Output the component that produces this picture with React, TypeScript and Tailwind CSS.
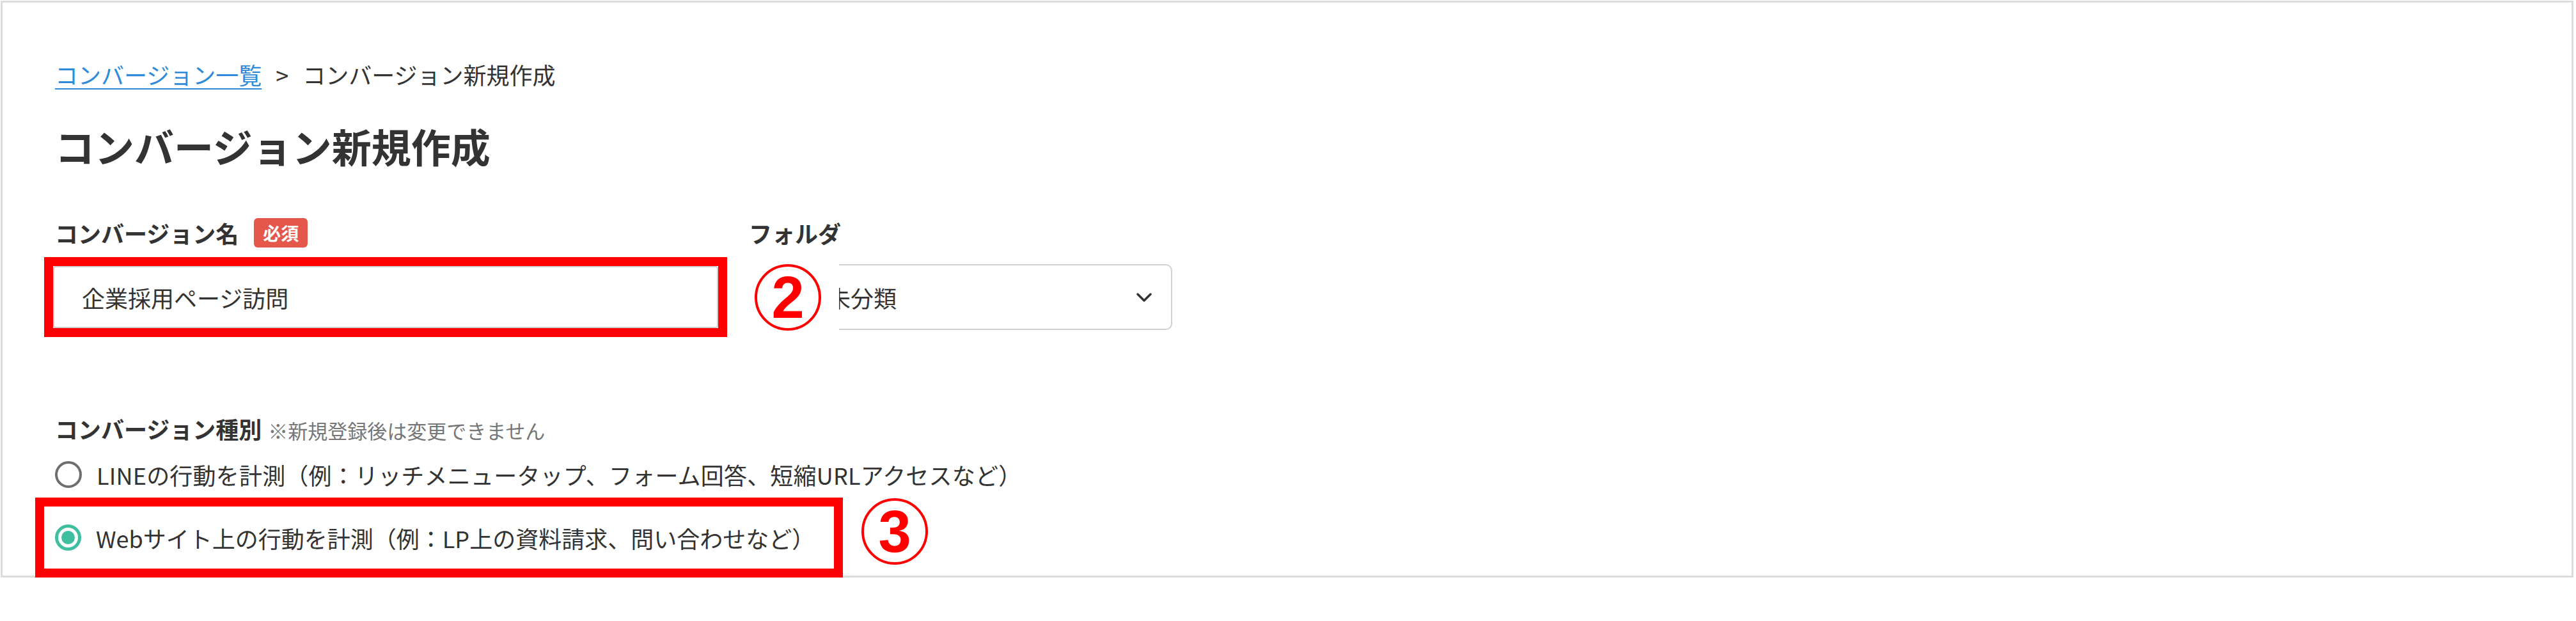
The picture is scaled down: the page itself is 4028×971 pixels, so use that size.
import { ReactNode } from 'react';

function RedBox({ className, children }: { className?: string; children: ReactNode }) {
  return <div className={`border-[14px] border-[#ff0000] ${className ?? ''}`}>{children}</div>;
}

function NumberMark({ n }: { n: string }) {
  return (
    <div className="w-[104px] h-[104px] rounded-full border-[4px] border-[#ff0000] bg-white flex items-center justify-center">
      <span className="font-['Liberation_Sans',Arial,sans-serif] font-bold text-[#ff0000] text-[92px] leading-none">
        {n}
      </span>
    </div>
  );
}

function Radio({ checked }: { checked?: boolean }) {
  if (checked) {
    return (
      <span className="w-[41px] h-[41px] rounded-full border-[5px] border-[#40bfa0] flex items-center justify-center shrink-0">
        <span className="w-[21px] h-[21px] rounded-full bg-[#40bfa0]" />
      </span>
    );
  }
  return <span className="w-[42px] h-[42px] rounded-full border-[4px] border-[#6e6e6e] shrink-0" />;
}

export default function App() {
  return (
    <div className="w-[4028px] h-[971px] bg-white font-['Noto_Sans_CJK_JP','Noto_Sans',sans-serif] text-[#333333] pt-[1px] pl-[1px]">
      <div className="w-[4023px] h-[902px] border-[3px] border-[#dcdcdc] pl-[82px] pt-[85px]">
        {/* breadcrumb */}
        <div className="flex items-center text-[36px] leading-[54px]">
          <a className="text-[#2f8bd9] underline decoration-2 underline-offset-[6px]">コンバージョン一覧</a>
          <span className="mx-[22px] text-[#333333]">&gt;</span>
          <span>コンバージョン新規作成</span>
        </div>

        <h1 className="mt-[45px] text-[62px] leading-[80px] font-bold">コンバージョン新規作成</h1>

        {/* name + folder */}
        <div className="mt-[69px] flex">
          <div className="w-[1051px]">
            <div className="flex items-center h-[54px]">
              <span className="text-[36px] leading-[54px] font-bold">コンバージョン名</span>
              <span className="ml-[24px] h-[46px] px-[14px] rounded-[6px] bg-[#e5564b] text-white text-[28px] font-bold flex items-center">
                必須
              </span>
            </div>
            <RedBox className="mt-[11px] -ml-[17px] w-[1068px] h-[125px]">
              <div className="h-full border-[2px] border-[#cfcfcf] rounded-[4px] flex items-center pl-[43px] text-[36px]">
                企業採用ページ訪問
              </div>
            </RedBox>
          </div>

          <div className="ml-[32px]">
            <div className="h-[54px] flex items-center">
              <span className="text-[36px] leading-[54px] font-bold ml-[2px]">フォルダ</span>
            </div>
            <div className="mt-[11px] h-[125px] flex items-center relative">
              <div className="w-[664px] h-[103px] border-[2px] border-[#d0d0d0] rounded-[10px] flex items-center justify-between pl-[123px] pr-[30px] text-[36px]">
                <span>未分類</span>
                <svg width="24" height="14" viewBox="0 0 24 14" fill="none">
                  <polyline points="2,2 12,12 22,2" stroke="#333" strokeWidth="3.5" strokeLinecap="round" strokeLinejoin="round" />
                </svg>
              </div>
              <div className="absolute left-[-24px] top-[2px] bottom-[2px] w-[167px] bg-white flex items-center pl-[35px]">
                <NumberMark n="2" />
              </div>
            </div>
          </div>
        </div>

        {/* type */}
        <div className="mt-[116px] flex items-baseline h-[54px]">
          <span className="text-[36px] leading-[54px] font-bold">コンバージョン種別</span>
          <span className="ml-[10px] text-[31px] text-[#777777]">※新規登録後は変更できません</span>
        </div>

        <div className="mt-[18px] flex items-center h-[54px] gap-[23px]">
          <Radio />
          <span className="text-[36px] tracking-[0.2px]">LINEの行動を計測（例：リッチメニュータップ、フォーム回答、短縮URLアクセスなど）</span>
        </div>

        <div className="mt-[9px] flex items-start gap-[29px]">
          <RedBox className="-ml-[31px] w-[1263px] h-[125px] flex items-center pl-[17px] gap-[23px]">
            <Radio checked />
            <span className="text-[36px] whitespace-nowrap">Webサイト上の行動を計測（例：LP上の資料請求、問い合わせなど）</span>
          </RedBox>
          <div className="mt-[1px]">
            <NumberMark n="3" />
          </div>
        </div>
      </div>
    </div>
  );
}
